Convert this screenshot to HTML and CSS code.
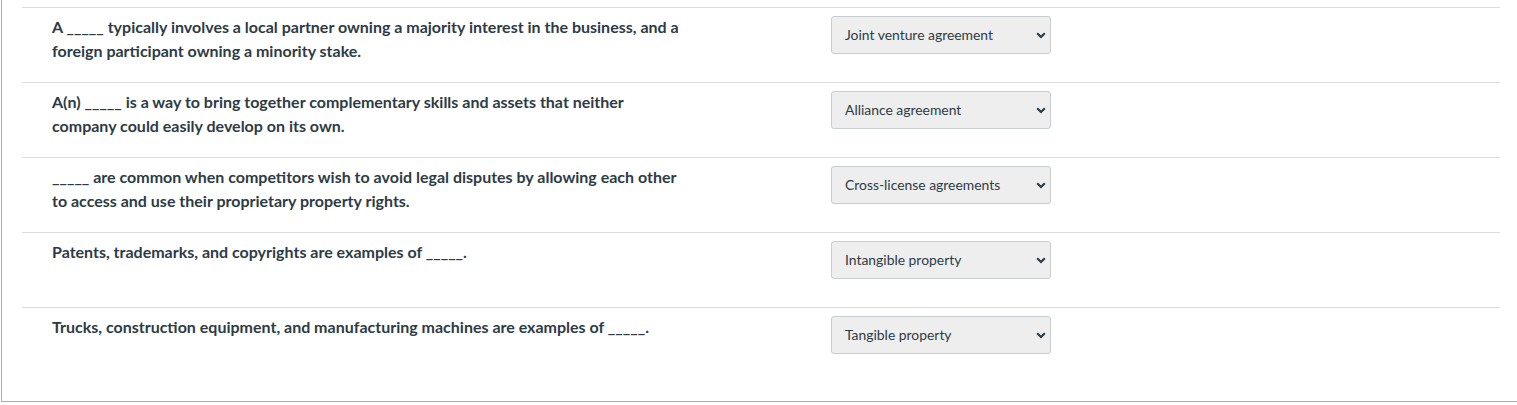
FILE: index.html
```html
<!DOCTYPE html>
<html lang="en">
<head>
<meta charset="utf-8">
<title>Matching question</title>
<link rel="stylesheet" href="styles.css">
</head>
<body>
<div class="question">
  <div class="answers">
    <div class="match">
      <div class="prompt">A _____ typically involves a local partner owning a majority interest in the business, and a foreign participant owning a minority stake.</div>
      <div class="pick">
        <select class="choice"><option>Joint venture agreement</option></select>
        <svg class="chev" width="10" height="7" viewBox="0 0 10 7"><path d="M1.2 1.2 L5 5 L8.8 1.2" fill="none" stroke="#2d3b45" stroke-width="2.2"/></svg>
      </div>
    </div>
    <div class="match">
      <div class="prompt">A(n) _____ is a way to bring together complementary skills and assets that neither company could easily develop on its own.</div>
      <div class="pick">
        <select class="choice"><option>Alliance agreement</option></select>
        <svg class="chev" width="10" height="7" viewBox="0 0 10 7"><path d="M1.2 1.2 L5 5 L8.8 1.2" fill="none" stroke="#2d3b45" stroke-width="2.2"/></svg>
      </div>
    </div>
    <div class="match">
      <div class="prompt">_____ are common when competitors wish to avoid legal disputes by allowing each other to access and use their proprietary property rights.</div>
      <div class="pick">
        <select class="choice"><option>Cross-license agreements</option></select>
        <svg class="chev" width="10" height="7" viewBox="0 0 10 7"><path d="M1.2 1.2 L5 5 L8.8 1.2" fill="none" stroke="#2d3b45" stroke-width="2.2"/></svg>
      </div>
    </div>
    <div class="match">
      <div class="prompt">Patents, trademarks, and copyrights are examples of _____.</div>
      <div class="pick">
        <select class="choice"><option>Intangible property</option></select>
        <svg class="chev" width="10" height="7" viewBox="0 0 10 7"><path d="M1.2 1.2 L5 5 L8.8 1.2" fill="none" stroke="#2d3b45" stroke-width="2.2"/></svg>
      </div>
    </div>
    <div class="match">
      <div class="prompt">Trucks, construction equipment, and manufacturing machines are examples of _____.</div>
      <div class="pick">
        <select class="choice"><option>Tangible property</option></select>
        <svg class="chev" width="10" height="7" viewBox="0 0 10 7"><path d="M1.2 1.2 L5 5 L8.8 1.2" fill="none" stroke="#2d3b45" stroke-width="2.2"/></svg>
      </div>
    </div>
  </div>
</div>
</body>
</html>
```
FILE: styles.css
```css
html, body {
  margin: 0;
  padding: 0;
  background: #ffffff;
}
body {
  padding-left: 1px;
  font-family: Lato, "Liberation Sans", sans-serif;
  color: #2d3b45;
}
.question {
  border-left: 1px solid #a9a9a9;
  border-bottom: 1px solid #a9a9a9;
  height: 402px;
  box-sizing: border-box;
}
.answers {
  padding: 7px 17px 0 20px;
}
.match {
  display: grid;
  grid-template-columns: 635px 220px;
  column-gap: 144px;
  align-items: start;
  border-top: 1px solid #dddddd;
  height: 75px;
  box-sizing: border-box;
  padding: 7px 0 0 30px;
}
.prompt {
  font-size: 16px;
  font-weight: 700;
  line-height: 24px;
}
.pick {
  position: relative;
  margin-top: 1px;
}
.choice {
  appearance: none;
  -webkit-appearance: none;
  display: block;
  width: 220px;
  height: 38px;
  margin: 0;
  padding: 0 28px 2px 13px;
  box-sizing: border-box;
  background: #eeeeee;
  border: 1px solid #c7cdd1;
  border-radius: 3px;
  font-family: Lato, "Liberation Sans", sans-serif;
  font-size: 13.9px;
  color: #2d3b45;
}
.chev {
  position: absolute;
  right: 5px;
  top: 16px;
  pointer-events: none;
}
```
